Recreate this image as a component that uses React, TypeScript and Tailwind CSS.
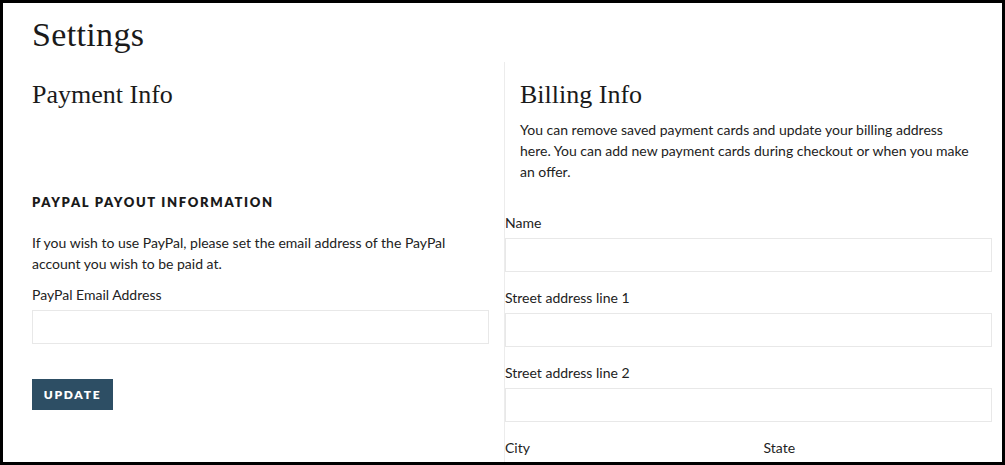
import React from "react";

const sans = "font-['Lato','Noto_Sans',sans-serif]";
const serif = "font-['Liberation_Serif','DejaVu_Serif',serif]";

const Field = ({ label }: { label: string }) => (
    <div className="mb-4">
        <label className={`block text-[14px] leading-[19px] text-[#222] mb-[6px] ${sans}`}>{label}</label>
        <input className="block w-full h-[34px] border border-[#e8e8e8] bg-white outline-none" />
    </div>
);

const App: React.FC = () => {
    return (
        <div className="w-[1005px] h-[465px] border-[3px] border-black overflow-hidden bg-white text-[#1a1a1a]">
            <h1 className={`pl-[29px] pt-[12px] h-[59px] text-[34px] leading-[40px] tracking-[0.01em] ${serif}`}>Settings</h1>

            <div className="flex">
                {/* left column */}
                <div className="w-[501px] shrink-0 pl-[29px] pr-[15px] pt-[17px]">
                    <h2 className={`text-[26px] leading-[32px] ${serif}`}>Payment Info</h2>

                    <h3 className={`mt-[81px] text-[13px] leading-[20px] font-[800] tracking-[0.13em] uppercase ${sans}`}>
                        PayPal Payout Information
                    </h3>
                    <p className={`mt-[20px] text-[14px] leading-[21px] text-[#222] ${sans}`}>
                        If you wish to use PayPal, please set the email address of the PayPal<br />
                        account you wish to be paid at.
                    </p>

                    <div className="mt-[11px]">
                        <label className={`block text-[14px] leading-[19px] text-[#222] mb-[6px] ${sans}`}>PayPal Email Address</label>
                        <input className="block w-full h-[34px] border border-[#e8e8e8] bg-white outline-none" />
                    </div>

                    <button className={`mt-[35px] w-[81px] h-[31px] bg-[#2d4e64] text-white text-[12px] font-[800] tracking-[0.14em] ${sans}`}>
                        UPDATE
                    </button>
                </div>

                {/* right column */}
                <div className="flex-1 border-l border-[#ececec] pr-[10px] pt-[17px] min-h-[420px]">
                    <div className="pl-[15px]">
                        <h2 className={`text-[26px] leading-[32px] ${serif}`}>Billing Info</h2>
                        <p className={`mt-[8px] text-[14px] leading-[21px] text-[#222] ${sans}`}>
                            You can remove saved payment cards and update your billing address<br />
                            here. You can add new payment cards during checkout or when you make<br />
                            an offer.
                        </p>
                    </div>

                    <div className="mt-[31px]">
                        <Field label="Name" />
                        <Field label="Street address line 1" />
                        <Field label="Street address line 2" />
                        <div className="grid grid-cols-2 gap-[10px]">
                            <label className={`block text-[14px] leading-[19px] text-[#222] ${sans}`}>City</label>
                            <label className={`block text-[14px] leading-[19px] text-[#222] pl-[10px] ${sans}`}>State</label>
                        </div>
                    </div>
                </div>
            </div>
        </div>
    );
};

export default App;
